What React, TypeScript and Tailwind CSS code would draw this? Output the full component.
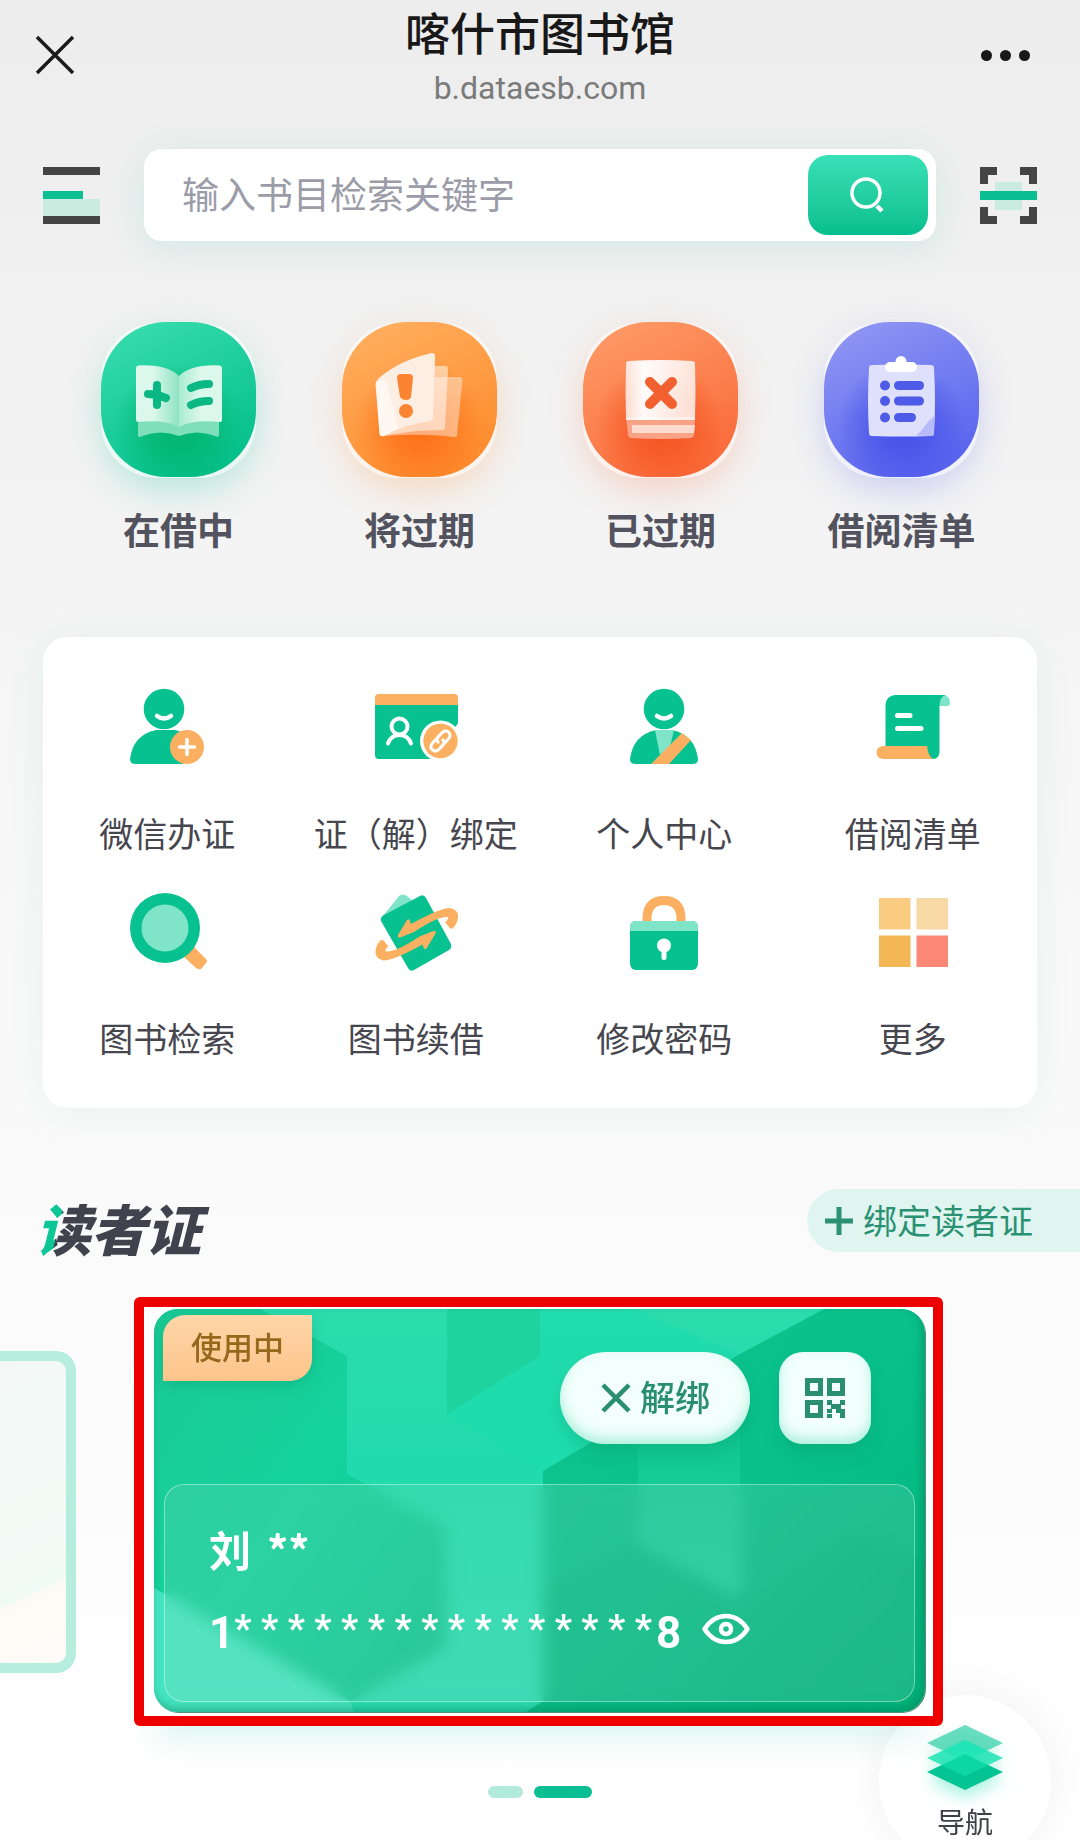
import { useState } from 'react';
import type { ReactNode } from 'react';

const GREEN = '#07c290';
const MINT = '#80e4c9';
const ORANGE = '#fbb061';

interface TileProps {
  id: string;
  from: string;
  to: string;
  glow: string;
  children: ReactNode;
}

/* Rounded tile behind the four shortcut icons */
function Tile({ id, from, to, glow, children }: TileProps) {
  return (
    <svg viewBox="0 0 155 155" className="w-[155px] h-[155px] overflow-visible">
      <defs>
        <linearGradient id={`${id}-bg`} x1="0.2" y1="0" x2="0.7" y2="1">
          <stop offset="0" stopColor={from} />
          <stop offset="1" stopColor={to} />
        </linearGradient>
        <radialGradient id={`${id}-glow`} cx="0.5" cy="0.68" r="0.42">
          <stop offset="0" stopColor={glow} />
          <stop offset="0.4" stopColor={glow} stopOpacity="0.7" />
          <stop offset="1" stopColor={glow} stopOpacity="0" />
        </radialGradient>
        <linearGradient id={`${id}-page`} x1="0" y1="0" x2="1" y2="0">
          <stop offset="0" stopColor="#fff" stopOpacity="0.75" />
          <stop offset="0.25" stopColor="#fff" stopOpacity="0.97" />
          <stop offset="1" stopColor="#fff" stopOpacity="0.78" />
        </linearGradient>
        <filter id={`${id}-blur`} x="-40%" y="-40%" width="180%" height="180%">
          <feGaussianBlur stdDeviation="18" />
        </filter>
      </defs>
      <rect x="2" y="16" width="151" height="151" rx="60" fill={to} opacity="0.26" filter={`url(#${id}-blur)`} />
      <rect y="1" width="155" height="155" rx="56" fill="#fff" opacity="0.6" />
      <rect width="155" height="155" rx="66" fill={`url(#${id}-bg)`} />
      <rect width="155" height="155" rx="66" fill={`url(#${id}-glow)`} />
      {children}
    </svg>
  );
}

const shortcuts = [
  {
    label: '在借中',
    icon: (
      <Tile id="borrowing" from="#36dcae" to="#04bf8a" glow="#00b36c">
        <defs>
          <linearGradient id="leaf-l" x1="0" y1="0" x2="1" y2="0">
            <stop offset="0.4" stopColor="#dcf7ec" />
            <stop offset="1" stopColor="#8ee3c4" />
          </linearGradient>
          <linearGradient id="leaf-r" x1="0" y1="0" x2="1" y2="0">
            <stop offset="0" stopColor="#a9ecd3" />
            <stop offset="0.5" stopColor="#dcf7ec" />
          </linearGradient>
        </defs>
        <path d="M37 96V114Q38 116 41 114Q60 107 78 114Q96 107 114 114Q118 116 118 113V96Z" fill="#7fdfbb" />
        <path d="M78 54Q66 42 37 43.500Q35 44 35 46V98Q35 100 37 100Q64 97 78 105Z" fill="url(#leaf-l)" />
        <path d="M78 54Q90 42 119 43.500Q121 44 121 46V98Q121 100 119 100Q92 97 78 105Z" fill="url(#leaf-r)" />
        <path d="M56 63V83M47 72Q56 72 65 76" stroke="#0bb884" strokeWidth="8" strokeLinecap="round" fill="none" />
        <path d="M90 66Q98 62 108 62M90 83Q98 79 108 79" stroke="#0bb884" strokeWidth="8" strokeLinecap="round" fill="none" />
      </Tile>
    ),
  },
  {
    label: '将过期',
    icon: (
      <Tile id="expiring" from="#ffae5e" to="#fd8b2c" glow="#ff6f16">
        <path d="M93 55H118Q121 56 120.500 59L115 113Q115 115 112 115Q80 111 40 114Z" fill="#fff" opacity="0.42" />
        <path d="M88 44H103Q106 44 106 47L103 105Q103 108 100 108Q70 108 40 114Z" fill="#fff" opacity="0.5" />
        <path d="M33.500 62Q34 59 37 56Q58 38 90 31Q93 31 93 34L91 96Q91 98 88 99Q60 103 42 114Q38 115 37.500 112Z" fill="#fdeee4" />
        <path d="M34 60Q40 57 45 60L56 107L42 114Q38 115 37.500 112Z" fill="#fff" opacity="0.5" />
        <path d="M59 52H67Q71 52 71 56L69 75Q68 78 64 78T58 75L55 56Q55 52 59 52Z" fill="#fb8433" />
        <circle cx="64" cy="89" r="7" fill="#fb8433" />
      </Tile>
    ),
  },
  {
    label: '已过期',
    icon: (
      <Tile id="expired" from="#fd9a66" to="#fa6a39" glow="#f4521f">
        <path d="M43 95L45 112Q45 116 49 116Q78 118 107 116Q111 116 111 112L112 95Z" fill="#f8a387" />
        <path d="M49 103H112L111 111H49Z" fill="#fddcd0" />
        <path d="M43 42Q43 39 46 39Q78 37 109 39Q112 39 112 42Q113 70 112 98H43Q42 70 43 42Z" fill="url(#expired-page)" />
        <path d="M67 60L89 82M89 60L67 82" stroke="#f3602f" strokeWidth="10" strokeLinecap="round" />
      </Tile>
    ),
  },
  {
    label: '借阅清单',
    icon: (
      <Tile id="booklist" from="#8f96f3" to="#5763ee" glow="#4450e8">
        <path d="M45 46Q45 43 48 43Q78 42 107 43Q110 43 110 46Q112 80 110 111Q110 114 107 114Q78 115 48 114Q45 114 45 111Q43 80 45 46Z" fill="#dfe0fc" />
        <path d="M110 94V111Q110 114 107 114L92 113.500Q97 110 101 104Q105 98 110 94Z" fill="#b6baf7" />
        <rect x="61" y="40" width="32" height="10" rx="5" fill="#fff" />
        <circle cx="77" cy="39.500" r="5.500" fill="#fff" />
        <g fill="#4d5be6">
          <circle cx="61" cy="63.500" r="5" />
          <circle cx="61" cy="79" r="5" />
          <circle cx="61" cy="95.500" r="5" />
          <rect x="70" y="59" width="30" height="9" rx="4.500" />
          <rect x="70" y="74.500" width="30" height="9" rx="4.500" />
          <rect x="70" y="91" width="22" height="9" rx="4.500" />
        </g>
      </Tile>
    ),
  },
];

const services = [
  {
    label: '微信办证',
    icon: (
      <>
        <circle cx="39" cy="24" r="20.300" fill={GREEN} />
        <path d="M32 31Q39 36 46 31" stroke="#fff" strokeWidth="4.500" strokeLinecap="round" fill="none" />
        <path d="M5 74Q8 50 31 45H50Q60 47 64 52L58 79H10Q5 79 5 74Z" fill={GREEN} />
        <circle cx="62" cy="62" r="17" fill={ORANGE} />
        <path d="M62 54.500V69.500M54.500 62H69.500" stroke="#fff" strokeWidth="3.500" strokeLinecap="round" />
      </>
    ),
  },
  {
    label: '证（解）绑定',
    icon: (
      <>
        <path d="M1 19H84V70Q84 74 80 74H5Q1 74 1 70Z" fill={GREEN} />
        <path d="M1 20V13Q1 9 5 9H80Q84 9 84 13V20Z" fill={ORANGE} />
        <g stroke="#fff" strokeWidth="4" strokeLinecap="round" fill="none">
          <circle cx="25.500" cy="41.500" r="8" />
          <path d="M14 58.500Q17 50 25.500 50Q34 50 37 58.500" />
        </g>
        <path d="M60 76L84 38V76Z" fill="#fff" />
        <circle cx="66.500" cy="56" r="20.500" fill="#fff" />
        <circle cx="66.500" cy="56" r="17.200" fill={ORANGE} />
        <g stroke="#fff" strokeWidth="3" strokeLinecap="round" fill="none" transform="rotate(-48 66.500 56)">
          <path d="M64 51.500H60Q54.500 51.500 54.500 56T60 60.500H65Q69 60.500 69 57" />
          <path d="M69 60.500H73Q78.500 60.500 78.500 56T73 51.500H68Q64 51.500 64 55" />
        </g>
      </>
    ),
  },
  {
    label: '个人中心',
    icon: (
      <>
        <circle cx="42" cy="24" r="20.300" fill={GREEN} />
        <path d="M35 31Q42 36 49 31" stroke="#fff" strokeWidth="4.500" strokeLinecap="round" fill="none" />
        <path d="M8 74Q11 50 34 45H50Q73 50 76 74Q76 79 71 79H13Q8 79 8 74Z" fill={GREEN} />
        <path d="M33 45H52L48 62L38 70Z" fill={MINT} />
        <path d="M60 48L69 55L47 79H29Z" fill={ORANGE} />
      </>
    ),
  },
  {
    label: '借阅清单',
    icon: (
      <>
        <path d="M67 10H73Q79 11 79 18Q79 21 76 21H67Z" fill={MINT} />
        <path d="M24 10H75Q69 11 68.500 20V67Q68 74 62 74H50L14.500 62V20Q15 11 24 10Z" fill={GREEN} />
        <path d="M12 61H56Q57 71 62 74H12Q5.500 73 5.500 67.500T12 61Z" fill={ORANGE} />
        <path d="M26.500 30.500H39M26.500 43.500H50" stroke="#fff" strokeWidth="5" strokeLinecap="round" />
      </>
    ),
  },
  {
    label: '图书检索',
    icon: (
      <>
        <path d="M59 67L69 57L81 69Q83 71 81 73L76 79Q74 80 71 78Z" fill={ORANGE} />
        <circle cx="40" cy="38" r="35" fill={GREEN} />
        <circle cx="40" cy="38" r="23.500" fill={MINT} />
      </>
    ),
  },
  {
    label: '图书续借',
    icon: (
      <>
        <path d="M9 26L25 6Q29 3 33 6L40 12L11 28Z" fill={MINT} />
        <path d="M9 25.500L46 6Q50 4 52 8L77 54Q78 58 75 60L40 80Q36 82 34 78L7 31Q6 28 9 25.500Z" fill={GREEN} />
        {[0, 180].map((angle) => (
          <path
            key={angle}
            transform={`rotate(${angle} 42.750 44.250)`}
            d="M24 45L33 30Q35 28 36 31L37 34Q66 18 76 18Q85 20 84 28Q83 34 79 38Q77 40 75 37L71 32Q74 31 74 27Q64 26 40 42L26 47.500Q23 48 24 45Z"
            fill={ORANGE}
          />
        ))}
      </>
    ),
  },
  {
    label: '修改密码',
    icon: (
      <>
        <path d="M25 34V27Q26 10.500 42 10.500T59 27V34" stroke={ORANGE} strokeWidth="9" fill="none" />
        <rect x="8" y="31" width="68" height="49" rx="6" fill={GREEN} />
        <path d="M8 41V37Q8 31 14 31H70Q76 31 76 37V41Z" fill={MINT} />
        <circle cx="42" cy="55.500" r="7" fill="#fff" />
        <path d="M42 58V67.500" stroke="#fff" strokeWidth="5" strokeLinecap="round" />
      </>
    ),
  },
  {
    label: '更多',
    icon: (
      <>
        <rect x="8" y="8" width="31.500" height="31.500" fill="#f9cc82" />
        <rect x="45.500" y="8" width="31.500" height="31.500" fill="#f8d8a4" />
        <rect x="8" y="45.500" width="31.500" height="31.500" fill="#f3b755" />
        <rect x="45.500" y="45.500" width="31.500" height="31.500" fill="#fb8877" />
      </>
    ),
  },
];

function Header() {
  return (
    <header className="h-[120px] pl-8 pr-[50px] flex items-start justify-between">
      <button aria-label="关闭" className="h-[110px] w-[72px] flex items-center justify-start">
        <svg viewBox="0 0 46 46" className="w-[46px] h-[46px]">
          <path d="M5 5L41 41M41 5L5 41" stroke="#1a1a1a" strokeWidth="3.500" />
        </svg>
      </button>
      <div className="text-center">
        <h1 className="text-[45px] leading-[64px] font-medium text-[#181818]">喀什市图书馆</h1>
        <p className="text-[32px] leading-[48px] text-[#7b7b7b] font-[Roboto]">b.dataesb.com</p>
      </div>
      <button aria-label="更多操作" className="h-[110px] w-[54px] flex items-center justify-end gap-2">
        <span className="w-[11px] h-[11px] rounded-full bg-[#181818]"></span>
        <span className="w-[11px] h-[11px] rounded-full bg-[#181818]"></span>
        <span className="w-[11px] h-[11px] rounded-full bg-[#181818]"></span>
      </button>
    </header>
  );
}

function SearchBar() {
  return (
    <div className="mt-[29px] px-[43px] flex items-center gap-11">
      <button aria-label="菜单">
        <svg viewBox="0 0 57 57" className="w-[57px] h-[57px]">
          <path d="M0 32H57V49H0Z" fill="#c9ebe0" />
          <path d="M0 0H57V8H0ZM0 49H57V57H0Z" fill="#444" />
          <path d="M0 24H40V32H0Z" fill="#0cbf92" />
        </svg>
      </button>
      <form
        onSubmit={(e) => e.preventDefault()}
        className="flex-1 min-w-0 h-[92px] pl-[38px] pr-2 flex items-center bg-white rounded-[18px] shadow-[0_6px_36px_rgba(12,191,146,0.13)]"
      >
        <input
          type="text"
          aria-label="输入书目检索关键字"
          placeholder="输入书目检索关键字"
          className="flex-1 min-w-0 h-16 pb-1 bg-transparent text-[37px] outline-none placeholder:text-[#9b9ca8]"
        />
        <button
          aria-label="检索"
          className="w-[120px] h-20 rounded-[20px] flex items-center justify-center bg-gradient-to-b from-[#38e1b7] to-[#04be8d]"
        >
          <svg viewBox="0 0 40 40" className="w-10 h-10" fill="none" stroke="#fff" strokeWidth="3.500">
            <circle cx="18" cy="18" r="14" />
            <path d="M29 31L34 36" strokeWidth="4.500" />
          </svg>
        </button>
      </form>
      <button aria-label="扫一扫">
        <svg viewBox="0 0 57 57" className="w-[57px] h-[57px]">
          <rect x="15" y="15" width="27" height="28" fill="#c9ebe0" />
          <path d="M4 17V4H17M40 4H53V17M53 40V53H40M17 53H4V40" stroke="#444" strokeWidth="8" fill="none" />
          <path d="M0 24H57V33H0Z" fill="#0cbf92" />
        </svg>
      </button>
    </div>
  );
}

/* Faceted background of the reader card */
function CardFacets() {
  return (
    <svg viewBox="0 0 771 403" preserveAspectRatio="none" className="absolute inset-0 w-full h-full">
      <defs>
        <linearGradient id="facet-base" x1="0" y1="0" x2="0" y2="1">
          <stop offset="0" stopColor="#2cdcad" />
          <stop offset="0.45" stopColor="#20dbac" />
          <stop offset="1" stopColor="#2bdcb2" />
        </linearGradient>
        <linearGradient id="facet-left" x1="0" y1="0" x2="1" y2="1">
          <stop offset="0" stopColor="#1bca96" />
          <stop offset="0.5" stopColor="#14d29c" />
          <stop offset="1" stopColor="#10c48d" />
        </linearGradient>
        <linearGradient id="facet-right" x1="0" y1="0" x2="1" y2="1">
          <stop offset="0" stopColor="#10c690" />
          <stop offset="0.5" stopColor="#09c08a" />
          <stop offset="1" stopColor="#02b57c" />
        </linearGradient>
        <linearGradient id="facet-strip" x1="0" y1="0" x2="0" y2="1">
          <stop offset="0" stopColor="#14ca95" stopOpacity="0" />
          <stop offset="0.5" stopColor="#14ca95" />
          <stop offset="1" stopColor="#1bd09e" />
        </linearGradient>
      </defs>
      <rect width="771" height="403" fill="url(#facet-base)" />
      <path d="M0 0H106L193 47V165L291 219V339L196 392L0 279Z" fill="url(#facet-left)" />
      <path d="M0 279L196 392L200 403H0Z" fill="#44e4c0" />
      <path d="M293 0H386V47L293 105Z" fill="#1fd39f" />
      <path d="M293 105L386 162L586 45L480 0H386V47Z" fill="#1bdcae" opacity="0.6" />
      <path d="M670 0H771V403H372L389 392V162L586 45Z" fill="url(#facet-right)" />
      <path d="M484 106L586 45V290L484 235Z" fill="url(#facet-strip)" />
      <path d="M583 290L700 220L771 250V403H389V280L484 235Z" fill="#00aa70" opacity="0.14" />
    </svg>
  );
}

const maskedDigits = Array(16).fill('*').join(' ');

function ReaderCard() {
  const [hidden, setHidden] = useState(true);

  return (
    <div className="relative z-10 flex-1 min-w-0 border-[10px] border-[#ef0000] rounded-[6px] bg-white pt-[2px] pb-1 pl-[10px] pr-2 shadow-[0_36px_30px_-24px_rgba(12,191,146,0.14)]">
      <div className="relative rounded-3xl overflow-hidden pb-[10px] shadow-[1px_1px_0_#5b8d7c]">
        <CardFacets />
        <div className="absolute inset-0 rounded-3xl shadow-[inset_-3px_-4px_8px_rgba(0,110,70,0.4)]"></div>
        <div className="relative flex items-start gap-[29px] pl-[9px] pr-[54px]">
          <span className="mt-[6px] mr-auto w-[149px] h-[66px] pb-[3px] rounded-tl-[22px] rounded-br-[22px] flex items-center justify-center text-[31px] font-medium text-[#96681c] bg-gradient-to-b from-[#fed6a8] to-[#fdc48b] shadow-[0_4px_14px_rgba(0,120,80,0.25)]">
            使用中
          </span>
          <button className="mt-[43px] w-[190px] h-[92px] rounded-full flex items-center justify-center gap-2 text-[35px] font-medium text-[#2a8f70] bg-[#f2fffc] shadow-[inset_0_-6px_12px_rgba(130,230,200,0.6),0_8px_16px_rgba(0,140,95,0.25)]">
            <svg viewBox="0 0 32 32" className="w-8 h-8">
              <path d="M3 3L29 29M29 3L3 29" stroke="currentColor" strokeWidth="4.500" />
            </svg>
            <span className="pb-[3px]">解绑</span>
          </button>
          <button
            aria-label="二维码"
            className="mt-[43px] w-[92px] h-[92px] rounded-3xl flex items-center justify-center text-[#2a8f70] bg-[#f2fffc] shadow-[inset_0_-6px_12px_rgba(130,230,200,0.6),0_8px_16px_rgba(0,140,95,0.25)]"
          >
            <svg viewBox="0 0 40 40" className="w-10 h-10">
              <g fill="none" stroke="currentColor" strokeWidth="5">
                <rect x="2.500" y="2.500" width="13" height="13" />
                <rect x="24.500" y="2.500" width="13" height="13" />
                <rect x="2.500" y="24.500" width="13" height="13" />
              </g>
              <path
                d="M22 22H27V26H35V22H40V27H36V31H40V35H31V31H27V35H22V31H26V27H22ZM22 36H27V40H22ZM35 35H40V40H35Z"
                fill="currentColor"
              />
            </svg>
          </button>
        </div>
        <div className="relative mt-10 mx-[10px] pt-9 pb-10 pl-11 pr-8 rounded-[20px] border border-white/40 bg-[#b4d6c8]/15 backdrop-blur-[8px] text-white">
          <p className="flex gap-4 text-[42px] leading-[56px] font-bold">
            <span>刘</span>
            <span>**</span>
          </p>
          <div className="mt-7 flex items-start gap-5">
            <p className="flex items-start font-[Roboto] font-bold whitespace-nowrap">
              <span className="text-[44px] leading-[56px]">1</span>
              <span className="text-[38px] leading-[48px]">{maskedDigits}</span>
              <span className="ml-1 text-[44px] leading-[56px]">8</span>
            </p>
            <button
              aria-label="显示证号"
              aria-pressed={!hidden}
              onClick={() => setHidden(!hidden)}
              className="h-12 flex items-center"
            >
              <svg viewBox="0 0 50 36" className="w-[50px] h-9" fill="none" stroke="#fff" strokeWidth="4.500">
                <path d="M3.500 18Q12 5 25 5T46.500 18Q38 31 25 31T3.500 18Z" strokeLinejoin="round" />
                <circle cx="25" cy="18" r="5" />
              </svg>
            </button>
          </div>
        </div>
      </div>
    </div>
  );
}

function NavButton() {
  return (
    <button className="fixed right-[29px] bottom-[-27px] z-0 w-[172px] h-[172px] rounded-full bg-white pt-[30px] flex flex-col items-center shadow-[0_0_40px_rgba(0,0,0,0.06)]">
      <svg viewBox="0 0 76 66" className="w-[76px] h-[66px] drop-shadow-[0_8px_8px_rgba(12,220,165,0.35)]">
        <path d="M38 29L76 47L38 65L0 47Z" fill="#04c493" />
        <path d="M38 15L76 33L38 51L0 33Z" fill="#14e2b0" opacity="0.8" />
        <path d="M38 0L76 18L38 36L0 18Z" fill="#40d3ae" opacity="0.78" />
        <path d="M38 15L60 25.500L38 36L16 25.500Z" fill="#22e5b8" />
        <path d="M38 29L60 40L38 51L16 40Z" fill="#0cd6a3" />
      </svg>
      <span className="mt-4 text-[28px] leading-7 text-[#3f4047]">导航</span>
    </button>
  );
}

export default function App() {
  return (
    <div className="relative min-h-screen overflow-hidden pb-[43px] bg-gradient-to-b from-[#ededed] via-[#f8f8f8] to-white font-['Noto_Sans_CJK_SC',sans-serif]">
      <Header />
      <SearchBar />

      {/* Shortcuts */}
      <nav className="mt-[81px] px-[58px] grid grid-cols-4">
        {shortcuts.map((item) => (
          <a key={item.label} href="#" className="flex flex-col items-center">
            {item.icon}
            <span className="mt-7 text-[37px] leading-[48px] font-bold text-[#53535f]">{item.label}</span>
          </a>
        ))}
      </nav>

      {/* Services */}
      <section className="mt-[84px] mx-[43px] pt-12 pb-[50px] grid grid-cols-4 gap-y-[37px] bg-white rounded-3xl shadow-[0_4px_40px_rgba(12,150,120,0.07)]">
        {services.map((item) => (
          <a key={item.label} href="#" className="flex flex-col items-center">
            <svg viewBox="0 0 84 84" className="w-[84px] h-[84px]">
              {item.icon}
            </svg>
            <span className="mt-11 text-[34px] leading-10 whitespace-nowrap text-[#46464e]">{item.label}</span>
          </a>
        ))}
      </section>

      {/* Reader cards */}
      <div className="mt-[81px] pl-9 flex items-start justify-between">
        <h2 className="pt-[6px] pr-3 text-[55px] leading-[64px] font-black italic text-transparent bg-clip-text bg-[linear-gradient(104deg,#0cc795_31px,#42424f_31px)]">
          读者证
        </h2>
        <button className="h-[63px] pl-4 pr-[47px] flex items-center gap-2 rounded-l-full bg-[#e0f5ef] text-[34px] text-[#2a9273]">
          <svg viewBox="0 0 32 32" className="w-8 h-8">
            <path d="M16 2V30M2 16H30" stroke="currentColor" strokeWidth="5" />
          </svg>
          <span className="pb-[3px]">绑定读者证</span>
        </button>
      </div>

      <div className="mt-[38px] pr-[137px] flex items-center gap-[58px]">
        <div className="w-[76px] h-[322px] border-[10px] border-l-0 border-[#b7eddd] rounded-r-[20px] bg-[linear-gradient(155deg,#f3f8f7_0%,#f0faf5_74%,#fdfaf5_75%,#fefcf8_100%)]"></div>
        <ReaderCard />
      </div>

      <div className="mt-[60px] flex justify-center gap-[11px]">
        <span className="w-[35px] h-3 rounded-full bg-[#b2eadb]"></span>
        <span className="w-[58px] h-3 rounded-full bg-[#0cbf92]"></span>
      </div>

      <NavButton />
    </div>
  );
}
